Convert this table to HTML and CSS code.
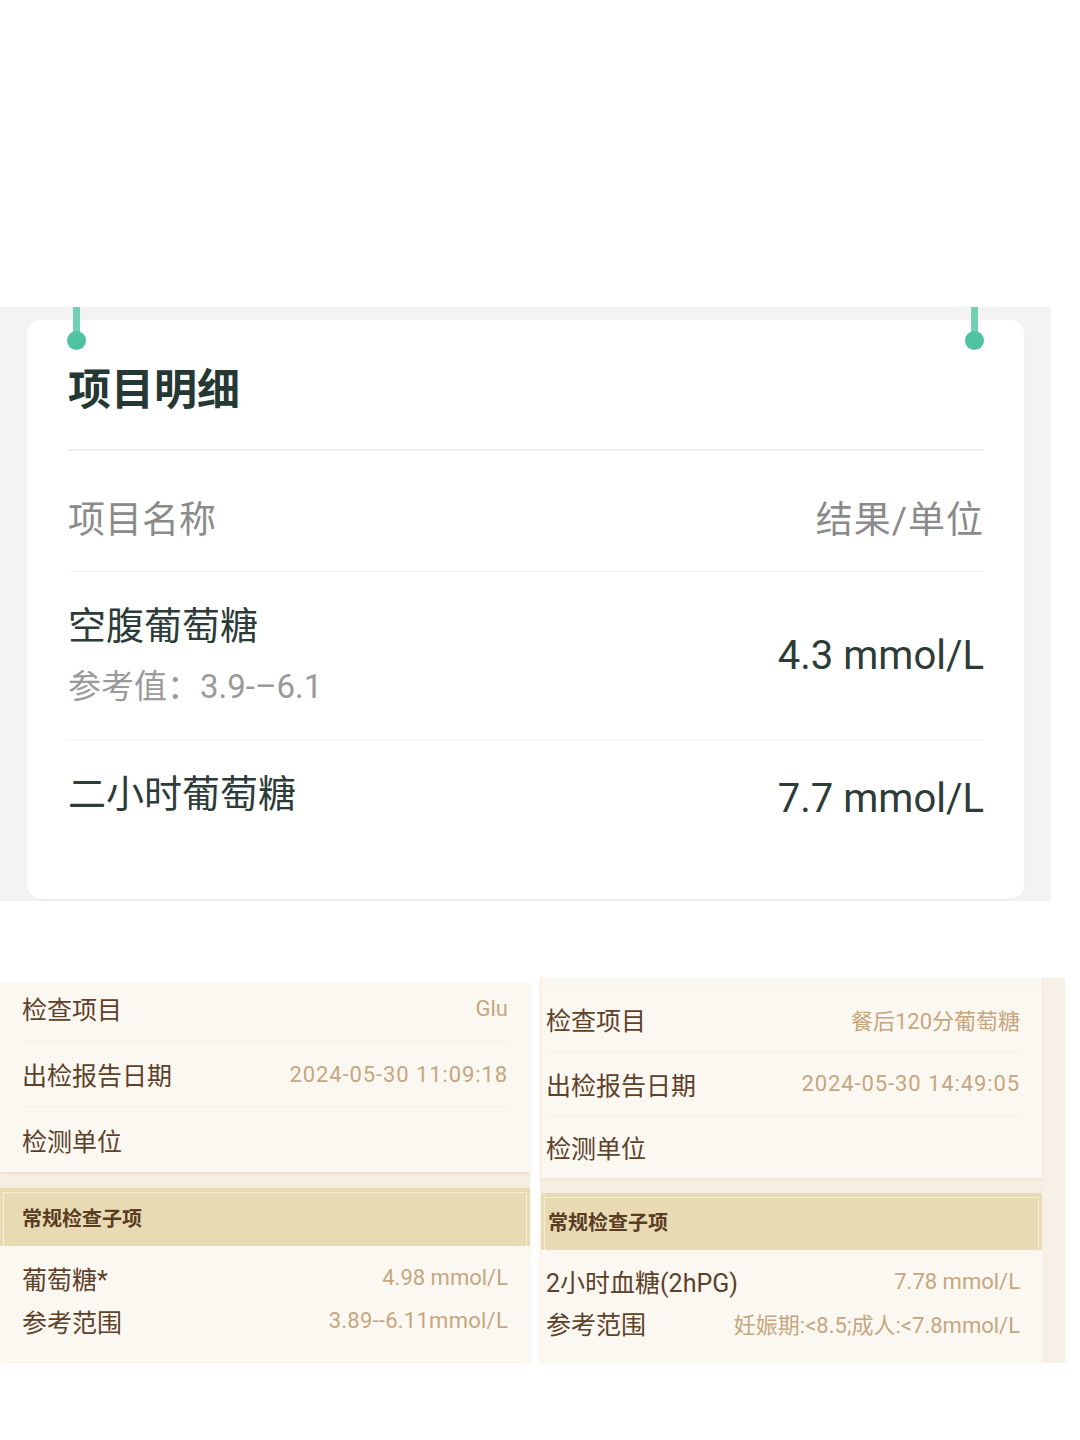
FILE: index.html
```html
<!DOCTYPE html>
<html lang="zh-CN">
<head>
<meta charset="utf-8">
<title>项目明细</title>
<link rel="stylesheet" href="styles.css">
</head>
<body>
<div class="top-blank"></div>
<section class="detail-bg">
  <div class="detail-card">
    <span class="pin pin-left"></span>
    <span class="pin pin-right"></span>
    <h1 class="detail-title">项目明细</h1>
    <div class="detail-head">
      <span>项目名称</span>
      <span class="head-right">结果/单位</span>
    </div>
    <div class="detail-row first">
      <div class="item-col">
        <div class="item-name">空腹葡萄糖</div>
        <div class="item-ref">参考值：3.9-–6.1</div>
      </div>
      <div class="item-val">4.3 mmol/L</div>
    </div>
    <div class="detail-row second">
      <div class="item-name">二小时葡萄糖</div>
      <div class="item-val low">7.7 mmol/L</div>
    </div>
  </div>
</section>

<section class="reports">
  <div class="rpt rpt-left">
    <div class="rpt-card">
      <div class="rpt-row r-cut"><span class="lbl">检查项目</span><span class="val">Glu</span></div>
      <div class="rpt-row r-mid"><span class="lbl">出检报告日期</span><span class="val date">2024-05-30 11:09:18</span></div>
      <div class="rpt-row r-last"><span class="lbl">检测单位</span><span class="val"></span></div>
    </div>
    <div class="rpt-band"><span>常规检查子项</span></div>
    <div class="rpt-list">
      <div class="list-row"><span class="lbl">葡萄糖*</span><span class="val">4.98 mmol/L</span></div>
      <div class="list-row"><span class="lbl">参考范围</span><span class="val range">3.89--6.11mmol/L</span></div>
    </div>
  </div>

  <div class="rpt rpt-right">
    <div class="rpt-inner">
      <div class="rpt-card">
        <div class="rpt-top"></div>
        <div class="rpt-row r2"><span class="lbl">检查项目</span><span class="val">餐后120分葡萄糖</span></div>
        <div class="rpt-row r2 r2-sep"><span class="lbl">出检报告日期</span><span class="val date">2024-05-30 14:49:05</span></div>
        <div class="rpt-row r2 r2-sep r2-last"><span class="lbl">检测单位</span><span class="val"></span></div>
      </div>
      <div class="rpt-band band-r"><span>常规检查子项</span></div>
      <div class="rpt-list list-r">
        <div class="list-row"><span class="lbl">2小时血糖(2hPG)</span><span class="val">7.78 mmol/L</span></div>
        <div class="list-row"><span class="lbl">参考范围</span><span class="val">妊娠期:&lt;8.5;成人:&lt;7.8mmol/L</span></div>
      </div>
    </div>
  </div>
</section>
</body>
</html>
```

FILE: styles.css
```css
* { box-sizing: border-box; }
html, body { margin: 0; padding: 0; background: #ffffff; }
body {
  width: 1080px;
  font-family: Roboto, "Noto Sans CJK SC", sans-serif;
}

.top-blank { height: 307px; }

/* ---------- top detail card ---------- */
.detail-bg {
  width: 1051px;
  background: #f3f3f6;
  padding: 13px 27px 2px 27px;
}
.detail-card {
  position: relative;
  background: #ffffff;
  border-radius: 14px;
  height: 579px;
  padding: 0 40px 0 41px;
  box-shadow: 0 1px 1px rgba(0,0,0,0.04);
}
.pin {
  position: absolute;
  top: -13px;
  width: 7px;
  height: 33px;
  background: #72d0b4;
}
.pin::after {
  content: "";
  position: absolute;
  left: -6px;
  top: 24px;
  width: 19px;
  height: 19px;
  border-radius: 50%;
  background: #4fc29f;
}
.pin-left { left: 46px; }
.pin-right { left: 944px; }

.detail-title {
  margin: 0;
  padding: 47px 0 36px;
  font-size: 43px;
  line-height: 46px;
  font-weight: 700;
  color: #263833;
  border-bottom: 2px solid #efefef;
}
.detail-head {
  height: 121px;
  padding-top: 11px;
  display: flex;
  align-items: center;
  justify-content: space-between;
  font-size: 37px;
  color: #8b8b8b;
  border-bottom: 1px solid #f3f3f3;
}
.head-right { letter-spacing: 1px; }
.detail-row {
  display: flex;
  justify-content: space-between;
  color: #2d3c39;
}
.detail-row.first {
  height: 168px;
  align-items: center;
  border-bottom: 1px solid #f1f1f1;
}
.detail-row.second {
  align-items: flex-start;
  padding-top: 32px;
}
.item-name {
  font-size: 38px;
  line-height: 44px;
}
.item-ref {
  margin-top: 19px;
  font-size: 33px;
  line-height: 40px;
  color: #9a9a9a;
}
.item-val {
  font-size: 40px;
  line-height: 44px;
  color: #2d3c39;
}
.item-val.low { margin-top: 5px; }

/* ---------- bottom report screenshots ---------- */
.reports {
  display: flex;
  align-items: flex-start;
  padding-top: 77px;
}
.rpt {
  background: #f6eee3;
  box-shadow: 0 3px 4px rgba(180,160,130,0.12);
}
.rpt-left {
  width: 530px;
  margin-top: 4px;
}
.rpt-right {
  width: 525px;
  margin-left: 10px;
  background: #f7f0e7;
}
.rpt-inner {
  width: 501px;
  margin-left: 1px;
  background: #f6eee3;
}
.rpt-card {
  background: #fbf8f2;
  box-shadow: 0 2px 3px rgba(170,140,100,0.10);
}
.rpt-row {
  display: flex;
  align-items: center;
  justify-content: space-between;
  margin: 0 22px;
}
.lbl {
  font-size: 25px;
  color: #5e4129;
}
.val {
  font-size: 22px;
  color: #c6a67f;
}
.val.date { letter-spacing: 0.9px; }
.val.range { letter-spacing: 0.25px; }
.r-cut { height: 59px; padding-bottom: 7px; }
.r-mid { height: 65px; border-top: 1px solid #f4eee5; }
.r-last { height: 66px; border-top: 1px solid #f4eee5; }

.rpt-top { height: 9px; border-bottom: 1px solid #f7f2ea; }
.r2 { height: 64px; margin: 0 22px 0 5px; }
.r2-sep { border-top: 1px solid #f4eee5; }
.r2-last { height: 63px; }

.rpt-band {
  position: relative;
  margin-top: 16px;
  height: 58px;
  background: #e8dbb4;
  display: flex;
  align-items: center;
  padding-left: 22px;
  font-size: 20px;
  font-weight: 700;
  color: #5a3d22;
}
.rpt-band::before {
  content: "";
  position: absolute;
  inset: 4px 3px 0 3px;
  border: 1px solid rgba(255,250,235,0.55);
  border-bottom: none;
}
.band-r {
  margin-top: 15px;
  height: 57px;
  padding-left: 7px;
}
.rpt-list {
  background: #fbf8f2;
  height: 116px;
  padding: 10px 22px 0 22px;
}
.list-r {
  height: 113px;
  padding: 10px 22px 0 5px;
}
.list-row {
  display: flex;
  align-items: center;
  justify-content: space-between;
  height: 43px;
}
.list-r .list-row { height: 42px; }
```
